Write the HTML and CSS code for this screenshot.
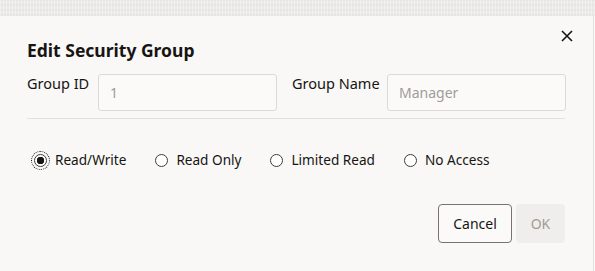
FILE: index.html
```html
<!doctype html>
<html lang="en">
	<head>
		<meta name="viewport" content="width=device-width,initial-scale=1" />
		<title>Edit Security Group</title>
		<link rel="stylesheet" href="styles.css">
	</head>
	<body>
		<div class="backdrop"></div>

		<section class="dialog">
			<header class="dialog-header">
				<h1 class="dialog-title">Edit Security Group</h1>
				<button type="button" class="close" aria-label="Close">
					<svg width="12" height="12" viewBox="0 0 12 12">
						<path d="M1 1 L11 11 M11 1 L1 11" stroke="#161513" stroke-width="1.6" fill="none" />
					</svg>
				</button>
			</header>

			<div class="fields">
				<label class="field field-id">
					<span class="field-label">Group ID</span>
					<input type="text" class="field-input" placeholder="1" />
				</label>
				<label class="field field-name">
					<span class="field-label">Group Name</span>
					<input type="text" class="field-input" placeholder="Manager" />
				</label>
			</div>

			<div class="access">
				<label class="radio is-focused"><input type="radio" name="access" checked /><span>Read/Write</span></label>
				<label class="radio"><input type="radio" name="access" /><span>Read Only</span></label>
				<label class="radio"><input type="radio" name="access" /><span>Limited Read</span></label>
				<label class="radio"><input type="radio" name="access" /><span>No Access</span></label>
			</div>

			<footer class="dialog-footer">
				<button type="button" class="btn">Cancel</button>
				<button type="button" class="btn btn-primary" disabled>OK</button>
			</footer>
		</section>
	</body>
</html>
```

FILE: styles.css
```css
body {
	margin: 0;
	background: #f9f8f6;
	color: #161513;
	font-family: "Noto Sans", sans-serif;
}

.backdrop {
	block-size: 16px;
	background:
		repeating-linear-gradient(90deg, rgb(255 255 255 / 0.35) 0 1px, transparent 1px 3px),
		repeating-linear-gradient(0deg, rgb(0 0 0 / 0.025) 0 2px, transparent 2px 5px),
		#ebeae8;
}

.dialog {
	box-sizing: border-box;
	inline-size: 594px;
	block-size: 255px;
	border-inline-end: 1px solid #e4e2df;
	padding: 0 28px 0 27px;
}

.dialog-header {
	display: flex;
	justify-content: space-between;
	align-items: flex-start;
	padding-block-start: 21px;
}

.dialog-title {
	margin: 0;
	font-size: 17.5px;
	font-weight: 700;
	line-height: 26px;
}

.close {
	border: 0;
	background: none;
	padding: 0;
	margin: -11px -12px 0 0;
	inline-size: 20px;
	block-size: 20px;
	display: grid;
	place-items: center;
}

.fields {
	display: flex;
	gap: 15px;
	padding-block: 10px 7px;
	border-block-end: 1px solid #e3e1de;
}

.field {
	display: flex;
	align-items: flex-start;
}

.field-label {
	font-size: 14.5px;
	line-height: 20px;
	white-space: nowrap;
}

.field-id .field-label {
	inline-size: 71px;
}

.field-name .field-label {
	inline-size: 95px;
}

.field-input {
	box-sizing: border-box;
	inline-size: 179px;
	block-size: 37px;
	margin-block-start: 1px;
	border: 1px solid #dcdad6;
	border-radius: 3px;
	background: #fbfaf9;
	padding: 0 11px;
	font: inherit;
	font-size: 14px;

	&::placeholder {
		color: #a09c97;
	}
}

.access {
	display: flex;
	gap: 29px;
	padding: 31px 0 0 7px;
}

.radio {
	display: flex;
	align-items: center;
	gap: 8px;
	font-size: 13.6px;
	line-height: 20px;

	& input {
		appearance: none;
		margin: 0;
		inline-size: 13px;
		block-size: 13px;
		border: 1.5px solid #3f3d3a;
		border-radius: 50%;
		background: #fff;

		&:checked {
			background: radial-gradient(circle, #161513 0 3.5px, #fff 4px);
		}
	}

	&.is-focused input {
		outline: 1px dotted #161513;
		outline-offset: 2px;
	}
}

.dialog-footer {
	display: flex;
	justify-content: flex-end;
	gap: 4px;
	padding-block-start: 34px;
}

.btn {
	box-sizing: border-box;
	inline-size: 74px;
	block-size: 39px;
	padding: 0;
	border: 1px solid #77736e;
	border-radius: 4px;
	background: #fbfaf9;
	color: #161513;
	font: inherit;
	font-size: 14px;
}

.btn-primary {
	border-color: transparent;
	background: #efeeec;
	color: #a09c97;
	inline-size: 49px;
}
```
